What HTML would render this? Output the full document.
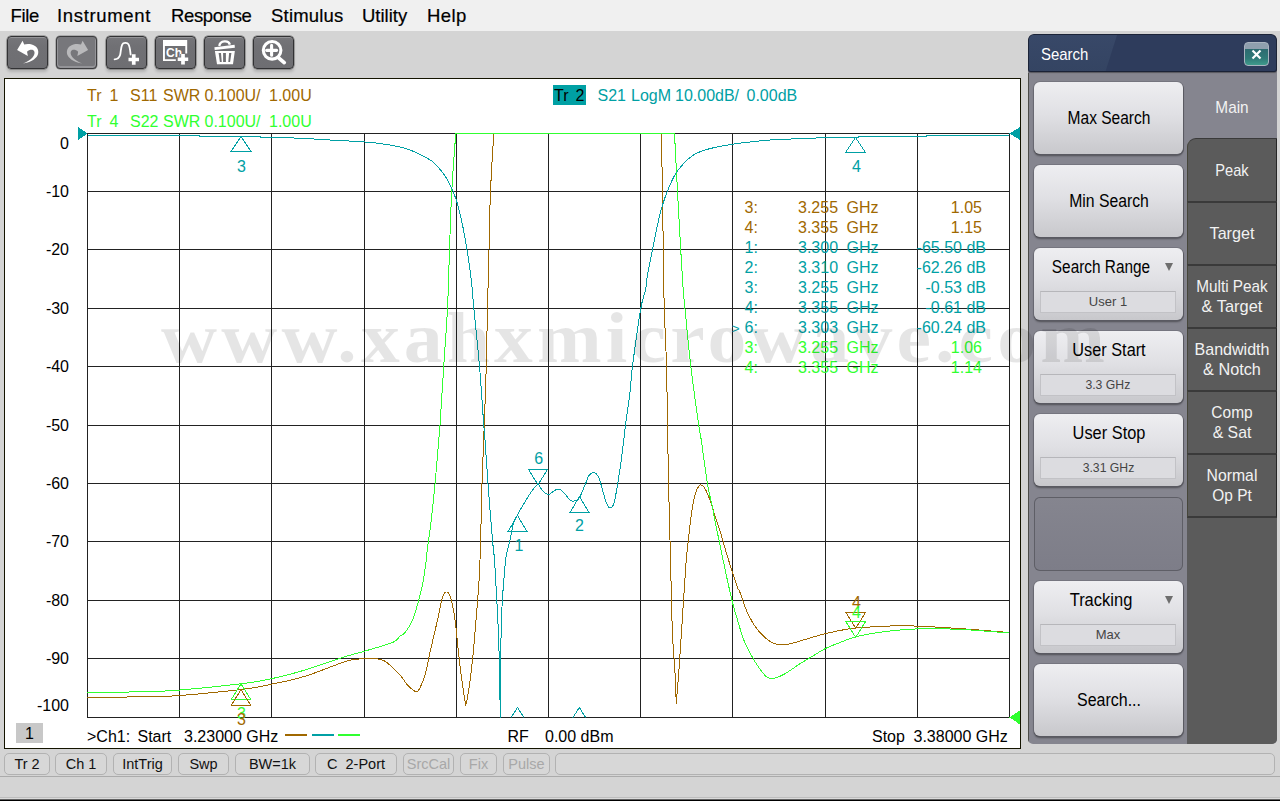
<!DOCTYPE html>
<html lang="en">
<head>
<meta charset="utf-8">
<title>Network Analyzer - Search</title>
<style>
html,body{margin:0;padding:0;}
body{width:1280px;height:801px;overflow:hidden;background:#d4d4d4;font-family:"Liberation Sans",sans-serif;position:relative;}
#app{position:absolute;left:0;top:0;width:1280px;height:801px;overflow:hidden;background:#d4d4d4;}
#menubar{position:absolute;left:0;top:0;width:1280px;height:31px;background:#f0f0f0;}
#menubar span{-webkit-text-stroke:.2px #000;position:absolute;top:4px;font-size:18.5px;line-height:24px;color:#000;white-space:nowrap;}
#toolbar{position:absolute;left:0;top:31px;width:1280px;height:47px;background:#d4d4d4;}
.tb{position:absolute;top:5px;width:39px;height:31px;border:1px solid #323234;border-radius:4px;background:linear-gradient(#76767a,#707074 30%,#6e6e72);box-shadow:0 0 0 .5px rgba(50,50,52,.6),0 3px 3px rgba(0,0,0,.16), inset 0 1px 0 rgba(255,255,255,.22);}
.tb.dis{background:#77777b;border-color:#3c3c3e;box-shadow:0 0 0 .5px rgba(50,50,52,.5), inset 0 -1px 0 1px rgba(255,255,255,.22);}
.tb svg{position:absolute;left:-1px;top:-1px;width:41px;height:33px;}
#plot{position:absolute;left:4px;top:78px;width:1015px;height:669px;border:1px solid #141400;background:#fff;}
#chart{position:absolute;left:0;top:0;width:1280px;height:801px;font-family:"Liberation Sans",sans-serif;}
#wm{position:absolute;left:161px;top:298px;transform:scaleX(1.078);transform-origin:0 0;font-family:"Liberation Serif",serif;font-weight:bold;font-size:72px;line-height:80px;letter-spacing:3.85px;color:rgba(0,0,0,.10);white-space:nowrap;}
#status .sb{position:absolute;top:753px;height:20px;border:1px solid #b2b2b2;border-radius:5px;background:#d7d7d7;font-size:14.5px;line-height:20px;text-align:center;color:#111;white-space:pre;}
#status .sb.dis{color:#a8a8a8;}
#sep{position:absolute;left:0;top:776px;width:1280px;height:1px;background:#ababab;}
#bottom{position:absolute;left:0;top:777px;width:1280px;height:20px;background:#d4d4d4;border-bottom:1px solid #bdbdbd;}
#bline{position:absolute;left:0;top:798px;width:1280px;height:3px;background:linear-gradient(#dadada 0,#dadada 33%,#606060 34%,#606060 66%,#000 67%);}
/* Search panel */
#panel{position:absolute;left:1028px;top:34px;width:249px;height:710px;border-radius:6px 6px 5px 5px;background:#85858f;overflow:hidden;}
#pbody{position:absolute;left:0;top:1px;width:249px;height:709px;}
#ptitle{position:absolute;left:0;top:0;width:249px;height:38px;z-index:2;box-sizing:border-box;background:#2e3c5c;border:1px solid #1c2438;border-bottom:1px solid #1a2236;border-radius:6px 6px 3px 3px;color:#fff;font-size:17px;line-height:38px;overflow:hidden;box-shadow:0 1px 1px rgba(0,0,0,.35);}
#ptitle i{position:absolute;left:0;top:0;width:95px;height:38px;background:linear-gradient(#384868,#344462);clip-path:polygon(0 0,88px 0,76px 38px,0 38px);}
#ptitle span{position:absolute;left:12px;top:1px;transform:scaleX(.88);transform-origin:0 50%;}
#pclose{z-index:3;position:absolute;left:216px;top:7px;width:23px;height:22px;border:1px solid #aab4c0;border-radius:4px;background:linear-gradient(#8f9fae 0,#8f9fae 26%,#2d6a70 27%,#2f7a78 70%,#3f9a8c 100%);}
#pclose svg{position:absolute;left:0;top:0;}
#tabs{position:absolute;left:159px;top:38px;width:90px;height:671px;background:linear-gradient(#85858f 0,#85858f 100px,#5b5b5b 100px);}
.tab span{display:block;}
.tab{position:absolute;left:0;width:90px;color:#f2f2f2;font-size:17px;line-height:20px;text-align:center;box-sizing:border-box;}
.tab.off{background:#5b5b5b;border-top:2px solid #3a3a3a;border-left:1px solid #46463a;border-right:1px solid #262626;}
.tab.on{background:#85858f;}
.btn{position:absolute;left:6px;width:149px;height:72px;border-radius:6px;background:linear-gradient(#eeeef1 0%,#e0e0e4 45%,#c8c8cc 100%);box-shadow:1px 1px 0 #5a5a62,0 2px 2px rgba(0,0,0,.4),0 0 0 1px rgba(70,70,80,.25);color:#000;font-size:17.5px;text-align:center;}
.btn .lbl{position:absolute;left:0;width:150px;line-height:20px;margin-top:1px;}
.btn .val{position:absolute;left:6px;top:43px;width:134px;height:20px;border:1px solid #c2c2c6;border-top-color:#b6b6ba;background:#dcdce0;font-size:13px;line-height:19px;color:#444;}
.btn .arr{position:absolute;left:131px;top:15px;width:0;height:0;border-left:4.2px solid transparent;border-right:4.2px solid transparent;border-top:8px solid #6e6e6e;}
.btn.empty{background:linear-gradient(#85858f,#7d7d88);box-shadow:inset 0 0 0 1px #5e5e66;}
</style>
</head>
<body>
<div id="app">
  <div id="menubar">
    <span style="left:10.5px;letter-spacing:-.3px">File</span><span style="left:57px;letter-spacing:.66px">Instrument</span><span style="left:171px;letter-spacing:-.35px">Response</span><span style="left:271px;letter-spacing:.2px">Stimulus</span><span style="left:362px">Utility</span><span style="left:427px;letter-spacing:.4px">Help</span>
  </div>
  <div id="toolbar">
    <div class="tb" style="left:7px"><svg viewBox="0 0 41 33"><path d="M10.1 14.1 L15.6 4.65 L17.2 8.6 C20 7.6 25 7.8 28.4 10.15 C31 12 32.2 16 30.5 19.6 C28.5 23.5 22 27.2 16.1 27.4 C20 26 23.5 23.5 25.3 21.7 C27.5 19.5 28.5 16 26.35 14.35 C24.5 13.3 22 14 20.05 15.65 L20.85 20.1 Z" fill="#fff"/></svg></div>
    <div class="tb dis" style="left:56px"><svg viewBox="0 0 41 33"><g transform="translate(42.2 0) scale(-1 1)"><path d="M10.1 14.1 L15.6 4.65 L17.2 8.6 C20 7.6 25 7.8 28.4 10.15 C31 12 32.2 16 30.5 19.6 C28.5 23.5 22 27.2 16.1 27.4 C20 26 23.5 23.5 25.3 21.7 C27.5 19.5 28.5 16 26.35 14.35 C24.5 13.3 22 14 20.05 15.65 L20.85 20.1 Z" fill="#b9b9bb"/></g></svg></div>
    <div class="tb" style="left:106px"><svg viewBox="0 0 41 33"><path d="M8.6 23.3 C11 23.3 13 22.5 14.1 19 C15 16 14.6 12 16.2 8.6 C17.2 6.6 21.3 6.3 22.5 8.4 C24 11 24.2 15 24.6 18.5" fill="none" stroke="#fff" stroke-width="1.8" stroke-linecap="round"/><path d="M22.5 23.5 H33 M27.75 18.3 V28.75" stroke="#fff" stroke-width="3.7" fill="none"/></svg></div>
    <div class="tb" style="left:155px"><svg viewBox="0 0 41 33"><path d="M8 4.1 H32.2 V17.5 H30.3 V9.9 H9.9 V23.25 H20.8 V25.1 H8 Z" fill="#fff"/><text x="11" y="20.7" font-size="12.5" font-weight="bold" fill="#fff" font-family="Liberation Sans, sans-serif" textLength="16" lengthAdjust="spacingAndGlyphs">Ch</text><path d="M22.7 23.25 H33.2 M28 18 V28.5" stroke="#707074" stroke-width="5.6" fill="none"/><path d="M22.7 23.25 H33.2 M28 18 V28.5" stroke="#fff" stroke-width="3.7" fill="none"/></svg></div>
    <div class="tb" style="left:204px"><svg viewBox="0 0 41 33"><path d="M10.9 15.1 H30.85 L29 28.2 H13 Z M14.6 17 L15.9 25.9 H17.75 L17 17 Z M19.1 17 V25.9 H21.9 V17 Z M25.1 17 L24.3 25.9 H26.1 L27.4 17 Z" fill="#fff" fill-rule="evenodd"/><path d="M10.4 11.2 L30.6 8.85 L30.85 11.7 L10.7 14 Z" fill="#fff"/><path d="M15.3 10 C16 4.5 24.5 3.8 25.9 8.6" fill="none" stroke="#fff" stroke-width="2.3"/></svg></div>
    <div class="tb" style="left:253px"><svg viewBox="0 0 41 33"><circle cx="19.1" cy="14.35" r="8.8" fill="none" stroke="#fff" stroke-width="3.1"/><path d="M13.6 14.35 H23.6 M18.6 9.4 V19.2" stroke="#fff" stroke-width="3.1" stroke-linecap="round" fill="none"/><path d="M25.6 21.9 L31.2 26.6" stroke="#fff" stroke-width="3.8" stroke-linecap="round" fill="none"/></svg></div>
  </div>
  <div id="plot"></div>
  <svg id="chart" width="1280" height="801" viewBox="0 0 1280 801">
    <defs><clipPath id="gc"><rect x="87" y="133" width="923" height="584.5"/></clipPath></defs>
<line x1="87.5" y1="133.0" x2="87.5" y2="718.0" stroke="#222" stroke-width="1" shape-rendering="crispEdges"/>
<line x1="179.5" y1="133.0" x2="179.5" y2="718.0" stroke="#222" stroke-width="1" shape-rendering="crispEdges"/>
<line x1="271.5" y1="133.0" x2="271.5" y2="718.0" stroke="#222" stroke-width="1" shape-rendering="crispEdges"/>
<line x1="364.5" y1="133.0" x2="364.5" y2="718.0" stroke="#222" stroke-width="1" shape-rendering="crispEdges"/>
<line x1="456.5" y1="133.0" x2="456.5" y2="718.0" stroke="#222" stroke-width="1" shape-rendering="crispEdges"/>
<line x1="548.5" y1="133.0" x2="548.5" y2="718.0" stroke="#222" stroke-width="1" shape-rendering="crispEdges"/>
<line x1="640.5" y1="133.0" x2="640.5" y2="718.0" stroke="#222" stroke-width="1" shape-rendering="crispEdges"/>
<line x1="732.5" y1="133.0" x2="732.5" y2="718.0" stroke="#222" stroke-width="1" shape-rendering="crispEdges"/>
<line x1="825.5" y1="133.0" x2="825.5" y2="718.0" stroke="#222" stroke-width="1" shape-rendering="crispEdges"/>
<line x1="917.5" y1="133.0" x2="917.5" y2="718.0" stroke="#222" stroke-width="1" shape-rendering="crispEdges"/>
<line x1="1009.5" y1="133.0" x2="1009.5" y2="718.0" stroke="#222" stroke-width="1" shape-rendering="crispEdges"/>
<line x1="87.0" y1="133.5" x2="1010.0" y2="133.5" stroke="#222" stroke-width="1" shape-rendering="crispEdges"/>
<line x1="87.0" y1="191.5" x2="1010.0" y2="191.5" stroke="#222" stroke-width="1" shape-rendering="crispEdges"/>
<line x1="87.0" y1="249.5" x2="1010.0" y2="249.5" stroke="#222" stroke-width="1" shape-rendering="crispEdges"/>
<line x1="87.0" y1="308.5" x2="1010.0" y2="308.5" stroke="#222" stroke-width="1" shape-rendering="crispEdges"/>
<line x1="87.0" y1="366.5" x2="1010.0" y2="366.5" stroke="#222" stroke-width="1" shape-rendering="crispEdges"/>
<line x1="87.0" y1="425.5" x2="1010.0" y2="425.5" stroke="#222" stroke-width="1" shape-rendering="crispEdges"/>
<line x1="87.0" y1="483.5" x2="1010.0" y2="483.5" stroke="#222" stroke-width="1" shape-rendering="crispEdges"/>
<line x1="87.0" y1="541.5" x2="1010.0" y2="541.5" stroke="#222" stroke-width="1" shape-rendering="crispEdges"/>
<line x1="87.0" y1="600.5" x2="1010.0" y2="600.5" stroke="#222" stroke-width="1" shape-rendering="crispEdges"/>
<line x1="87.0" y1="658.5" x2="1010.0" y2="658.5" stroke="#222" stroke-width="1" shape-rendering="crispEdges"/>
<line x1="87.0" y1="717.5" x2="1010.0" y2="717.5" stroke="#222" stroke-width="1" shape-rendering="crispEdges"/>
<polyline points="87.50,697.50 97.79,697.38 112.66,697.20 128.69,696.99 142.50,696.75 152.55,696.58 160.86,696.45 169.37,696.16 180.00,695.50 194.38,694.32 211.09,692.75 227.58,691.06 241.25,689.50 250.86,688.20 257.97,687.00 264.22,685.74 271.25,684.25 279.34,682.58 287.66,680.78 296.21,678.72 305.00,676.25 314.70,672.96 325.08,669.06 334.79,665.32 342.50,662.50 347.32,660.95 350.16,660.22 352.29,659.88 355.00,659.50 358.69,659.01 362.66,658.61 366.54,658.35 370.00,658.25 372.91,658.33 375.47,658.58 377.79,658.97 380.00,659.50 381.93,660.02 383.59,660.58 385.33,661.47 387.50,663.00 390.39,665.45 393.75,668.59 397.11,671.94 400.00,675.00 402.23,677.73 404.06,680.36 405.74,682.81 407.50,685.00 409.46,687.00 411.48,688.83 413.39,690.30 415.00,691.25 416.14,691.79 416.95,691.95 417.72,691.46 418.75,690.00 420.17,687.39 421.80,683.83 423.47,679.60 425.00,675.00 426.28,670.14 427.42,664.84 428.60,659.00 430.00,652.50 431.76,644.84 433.75,636.25 435.74,627.66 437.50,620.00 438.94,613.27 440.19,607.06 441.34,601.70 442.50,597.50 443.67,594.61 444.80,592.84 445.90,592.03 447.00,592.00 448.09,592.77 449.17,594.41 450.23,596.84 451.25,600.00 452.22,603.80 453.16,608.31 454.07,613.66 455.00,620.00 455.94,627.81 456.88,636.88 457.81,646.25 458.75,655.00 459.70,663.07 460.66,670.91 461.60,678.29 462.50,685.00 463.42,691.27 464.36,697.12 465.18,702.04 465.75,705.50 466.27,703.05 467.02,699.62 467.88,695.26 468.75,690.00 469.63,683.81 470.58,676.69 471.54,668.72 472.50,660.00 473.47,650.02 474.45,638.91 475.40,627.71 476.25,617.50 476.99,608.50 477.66,600.16 478.24,592.36 478.75,585.00 479.15,578.69 479.45,573.28 479.72,567.48 480.00,560.00 480.32,549.83 480.66,537.89 480.97,525.75 481.25,515.00 481.44,506.87 481.56,500.23 481.72,493.17 482.00,483.75 482.46,471.00 483.05,456.11 483.67,440.35 484.25,425.00 484.79,410.24 485.31,395.45 485.81,380.69 486.25,366.00 486.61,351.43 486.91,336.94 487.19,322.48 487.50,308.00 487.86,293.52 488.23,279.06 488.62,264.57 489.00,250.00 489.33,235.29 489.64,220.47 490.00,205.67 490.50,191.00 491.27,175.17 492.22,158.56 493.12,143.80 493.75,133.50" fill="none" stroke="#a06800" stroke-width="1" stroke-linejoin="round" shape-rendering="crispEdges"/>
<polyline points="661.25,133.50 661.49,143.80 661.83,158.56 662.19,175.17 662.50,191.00 662.72,205.67 662.89,220.47 663.06,235.29 663.25,250.00 663.45,264.57 663.66,279.06 663.91,293.52 664.25,308.00 664.75,322.48 665.38,336.94 666.00,351.43 666.50,366.00 666.84,380.69 667.07,395.45 667.27,410.24 667.50,425.00 667.76,439.76 668.03,454.55 668.30,469.24 668.60,483.75 668.93,498.13 669.29,512.42 669.65,526.44 670.00,540.00 670.32,553.06 670.63,565.70 670.94,578.00 671.25,590.00 671.53,601.78 671.80,613.28 672.10,624.39 672.50,635.00 673.07,645.05 673.75,654.61 674.43,663.74 675.00,672.50 675.43,681.48 675.78,690.47 676.05,698.28 676.25,703.75 676.70,698.28 677.34,690.47 678.07,681.48 678.75,672.50 679.38,663.56 680.00,654.14 680.62,644.52 681.25,635.00 681.88,625.62 682.50,616.25 683.12,606.88 683.75,597.50 684.40,587.54 685.08,577.19 685.71,567.62 686.25,560.00 686.59,555.59 686.80,553.44 687.04,551.45 687.50,547.50 688.26,540.49 689.22,531.72 690.25,522.71 691.25,515.00 692.19,508.86 693.12,503.52 694.06,498.92 695.00,495.00 695.97,491.85 696.95,489.45 697.90,487.65 698.75,486.25 699.43,485.29 700.00,484.84 700.57,484.79 701.25,485.00 702.07,485.41 702.97,486.09 703.95,487.17 705.00,488.75 706.16,490.92 707.42,493.61 708.72,496.68 710.00,500.00 711.22,503.60 712.42,507.52 713.66,511.68 715.00,516.00 716.50,520.57 718.12,525.41 719.75,530.29 721.25,535.00 722.56,539.42 723.75,543.69 724.94,547.98 726.25,552.50 727.75,557.44 729.38,562.66 731.00,567.79 732.50,572.50 733.90,576.84 735.23,580.94 736.46,584.57 737.50,587.50 738.21,589.16 738.67,589.84 739.17,590.61 740.00,592.50 741.24,596.03 742.73,600.55 744.42,605.42 746.25,610.00 748.23,614.27 750.39,618.52 752.67,622.57 755.00,626.25 757.41,629.53 759.92,632.50 762.47,635.16 765.00,637.50 767.50,639.54 770.00,641.28 772.50,642.69 775.00,643.75 777.50,644.39 780.00,644.64 782.50,644.63 785.00,644.50 787.38,644.25 789.69,643.83 792.15,643.24 795.00,642.50 798.40,641.54 802.19,640.39 806.13,639.17 810.00,638.00 813.75,636.90 817.50,635.80 821.25,634.74 825.00,633.75 828.75,632.85 832.50,632.02 836.25,631.24 840.00,630.50 843.63,629.79 847.19,629.12 850.90,628.52 855.00,628.00 859.53,627.59 864.38,627.28 869.53,627.02 875.00,626.75 880.90,626.44 887.19,626.12 893.63,625.87 900.00,625.75 905.96,625.78 911.72,625.92 917.87,626.17 925.00,626.50 933.29,626.92 942.42,627.44 952.22,628.05 962.50,628.75 974.53,629.67 987.97,630.77 1000.23,631.79 1008.75,632.50" fill="none" stroke="#a06800" stroke-width="1" stroke-linejoin="round" shape-rendering="crispEdges"/>
<polyline points="87.50,692.50 97.79,692.39 112.66,692.23 128.69,692.03 142.50,691.75 152.55,691.49 160.86,691.22 169.37,690.78 180.00,690.00 194.38,688.72 211.09,687.08 227.58,685.33 241.25,683.75 250.86,682.50 257.97,681.41 264.22,680.23 271.25,678.75 279.34,676.91 287.66,674.84 296.21,672.54 305.00,670.00 314.48,666.99 324.50,663.59 334.14,660.27 342.50,657.50 348.89,655.56 353.95,654.14 358.72,652.84 364.25,651.25 371.34,649.19 379.27,646.89 386.74,644.59 392.50,642.50 395.89,640.65 397.70,638.92 398.79,637.36 400.00,636.00 401.37,635.12 402.50,634.62 403.63,633.94 405.00,632.50 406.73,630.18 408.67,627.28 410.65,623.86 412.50,620.00 414.21,615.41 415.86,610.16 417.39,604.82 418.75,600.00 419.92,595.72 420.94,591.72 421.80,588.11 422.50,585.00 422.96,582.83 423.20,581.41 423.41,579.90 423.75,577.50 424.32,573.71 425.00,569.06 425.68,564.26 426.25,560.00 426.59,556.88 426.80,554.38 427.04,551.56 427.50,547.50 428.26,541.88 429.22,535.23 430.25,527.84 431.25,520.00 432.19,511.73 433.12,502.89 434.06,493.54 435.00,483.75 436.00,472.67 437.03,460.55 437.99,449.09 438.75,440.00 439.18,435.26 439.38,433.45 439.57,431.17 440.00,425.00 440.76,413.32 441.72,398.19 442.75,381.71 443.75,366.00 444.73,351.43 445.73,336.94 446.69,322.48 447.50,308.00 448.12,293.52 448.59,279.06 449.02,264.57 449.50,250.00 450.00,235.29 450.50,220.47 451.06,205.67 451.75,191.00 452.72,175.17 453.89,158.56 454.99,143.80 455.75,133.50 674.50,133.50 675.03,143.80 675.80,158.56 676.66,175.17 677.50,191.00 678.31,206.09 679.16,221.59 679.98,236.55 680.75,250.00 681.45,261.84 682.09,272.53 682.70,281.96 683.25,290.00 683.65,295.22 683.92,298.16 684.30,301.64 685.00,308.50 686.10,320.10 687.48,334.72 689.06,350.61 690.75,366.00 692.72,381.68 694.95,398.16 697.08,413.31 698.75,425.00 699.67,431.17 700.11,433.45 700.49,435.26 701.25,440.00 702.58,449.38 704.22,461.33 705.94,473.54 707.50,483.75 708.93,491.47 710.31,497.89 711.54,503.17 712.50,507.50 712.96,509.99 713.05,510.86 713.17,511.92 713.75,515.00 714.96,520.92 716.56,528.59 718.32,536.97 720.00,545.00 721.56,552.56 723.12,560.16 724.69,567.68 726.25,575.00 727.84,582.29 729.45,589.53 731.03,596.39 732.50,602.50 733.87,607.70 735.16,612.19 736.37,616.21 737.50,620.00 738.55,623.59 739.53,626.88 740.43,629.84 741.25,632.50 741.82,634.49 742.19,635.94 742.71,637.54 743.75,640.00 745.47,643.73 747.66,648.28 750.08,653.07 752.50,657.50 755.00,661.65 757.66,665.75 760.23,669.48 762.50,672.50 764.33,674.67 765.86,676.19 767.28,677.23 768.75,678.00 770.22,678.49 771.64,678.61 773.17,678.43 775.00,678.00 777.12,677.37 779.45,676.50 782.06,675.32 785.00,673.75 788.46,671.60 792.34,668.95 796.31,666.21 800.00,663.75 803.30,661.70 806.41,659.84 809.43,658.07 812.50,656.25 815.57,654.35 818.59,652.42 821.70,650.54 825.00,648.75 828.57,647.08 832.34,645.50 836.19,643.98 840.00,642.50 843.63,641.04 847.19,639.61 850.90,638.25 855.00,637.00 859.53,635.87 864.38,634.84 869.53,633.89 875.00,633.00 880.90,632.14 887.19,631.33 893.63,630.60 900.00,630.00 905.96,629.52 911.72,629.14 917.87,628.88 925.00,628.75 933.29,628.73 942.42,628.83 952.22,629.07 962.50,629.50 974.53,630.26 987.97,631.30 1000.23,632.31 1008.75,633.00" fill="none" stroke="#30ff30" stroke-width="1" stroke-linejoin="round" shape-rendering="crispEdges"/>
<polyline points="87.50,135.50 199.50,135.50 200.00,136.50 260.50,136.50 261.00,137.50 290.00,137.80 293.59,137.98 298.75,138.23 304.53,138.51 310.00,138.80 314.65,139.07 319.06,139.34 323.95,139.64 330.00,140.00 338.05,140.44 347.50,140.93 356.95,141.46 365.00,142.00 371.17,142.53 376.25,143.08 380.70,143.65 385.00,144.25 389.22,144.90 393.12,145.58 396.72,146.28 400.00,147.00 402.79,147.67 405.16,148.31 407.44,149.05 410.00,150.00 412.95,151.19 416.09,152.56 419.32,154.09 422.50,155.75 425.62,157.40 428.75,159.09 431.88,161.12 435.00,163.75 438.21,167.14 441.48,171.12 444.64,175.48 447.50,180.00 450.01,184.62 452.27,189.45 454.33,194.56 456.25,200.00 458.03,205.90 459.64,212.19 461.12,218.63 462.50,225.00 463.75,231.13 464.88,237.19 465.93,243.40 467.00,250.00 468.12,257.15 469.23,264.69 470.30,272.38 471.25,280.00 471.98,286.89 472.55,293.38 473.15,300.67 474.00,310.00 475.21,322.10 476.66,336.19 478.15,351.18 479.50,366.00 480.72,381.57 481.89,398.06 482.93,413.27 483.75,425.00 484.23,431.17 484.45,433.45 484.63,435.26 485.00,440.00 485.67,449.56 486.50,461.80 487.33,474.07 488.00,483.75 488.39,489.19 488.61,492.11 488.84,494.91 489.25,500.00 489.95,508.80 490.83,519.77 491.73,530.85 492.50,540.00 493.09,546.17 493.59,550.62 494.05,554.77 494.50,560.00 494.94,566.45 495.36,573.44 495.78,581.21 496.25,590.00 496.81,600.38 497.42,612.06 498.01,623.96 498.50,635.00 498.85,645.02 499.11,654.56 499.31,663.57 499.50,672.00 499.67,680.29 499.81,688.31 499.92,695.18 500.00,700.00 500.30,717.00 500.50,717.00 500.75,650.00 500.88,644.42 501.06,636.38 501.28,627.64 501.50,620.00 501.70,614.17 501.89,609.12 502.14,604.02 502.50,598.00 503.03,590.28 503.69,581.50 504.38,572.97 505.00,566.00 505.51,561.19 505.97,557.75 506.44,554.94 507.00,552.00 507.66,548.99 508.39,546.22 509.17,543.34 510.00,540.00 510.88,535.78 511.83,530.97 512.79,526.30 513.75,522.50 514.66,519.96 515.55,518.22 516.47,516.75 517.50,515.00 518.60,512.93 519.77,510.80 521.04,508.51 522.50,506.00 524.20,503.10 526.09,499.89 528.07,496.68 530.00,493.75 531.99,490.95 534.06,488.20 535.98,485.92 537.50,484.50 538.45,484.24 538.98,484.86 539.40,485.92 540.00,487.00 540.82,488.13 541.72,489.50 542.70,490.87 543.75,492.00 544.91,492.94 546.17,493.78 547.47,494.36 548.75,494.50 550.00,494.01 551.25,493.03 552.50,491.91 553.75,491.00 555.00,490.27 556.25,489.56 557.50,489.08 558.75,489.00 559.97,489.39 561.17,490.16 562.41,491.21 563.75,492.50 565.25,494.25 566.88,496.42 568.50,498.51 570.00,500.00 571.35,500.76 572.61,501.05 573.81,501.00 575.00,500.75 576.14,500.44 577.22,499.95 578.32,499.06 579.50,497.50 580.85,494.94 582.30,491.61 583.72,488.10 585.00,485.00 586.03,482.38 586.91,479.94 587.77,477.78 588.75,476.00 589.91,474.54 591.17,473.38 592.47,472.65 593.75,472.50 595.03,472.98 596.33,474.00 597.59,475.52 598.75,477.50 599.78,480.10 600.70,483.28 601.59,486.70 602.50,490.00 603.44,493.29 604.38,496.69 605.31,499.87 606.25,502.50 607.19,504.60 608.12,506.30 609.06,507.47 610.00,508.00 610.94,507.96 611.88,507.39 612.81,506.06 613.75,503.75 614.69,500.23 615.62,495.67 616.56,490.47 617.50,485.00 618.47,479.07 619.45,472.58 620.40,466.04 621.25,460.00 621.98,454.53 622.62,449.38 623.21,444.53 623.75,440.00 624.18,436.31 624.50,433.28 624.89,429.86 625.50,425.00 626.48,417.96 627.70,409.47 628.95,400.61 630.00,392.50 630.64,386.14 631.03,380.72 631.54,374.56 632.50,366.00 634.18,353.23 636.34,337.59 638.58,322.16 640.50,310.00 642.03,302.35 643.38,297.44 644.53,293.80 645.50,290.00 646.14,286.13 646.50,282.81 646.86,279.34 647.50,275.00 648.54,269.45 649.81,263.12 651.18,256.48 652.50,250.00 653.75,243.63 655.00,237.19 656.25,230.90 657.50,225.00 658.69,219.65 659.84,214.69 661.07,209.88 662.50,205.00 664.20,199.86 666.09,194.62 668.07,189.58 670.00,185.00 671.76,181.07 673.44,177.59 675.27,174.32 677.50,171.00 680.21,167.45 683.28,163.84 686.58,160.44 690.00,157.50 693.28,155.16 696.56,153.27 700.31,151.61 705.00,150.00 710.76,148.40 717.34,146.92 724.63,145.54 732.50,144.25 741.35,143.01 751.09,141.85 760.92,140.82 770.00,140.00 778.14,139.46 785.78,139.15 793.03,138.94 800.00,138.70 807.19,138.39 814.38,138.07 820.62,137.79 825.00,137.60 858.50,137.50 859.00,136.50 926.50,136.50 927.00,135.50 1009.00,135.50" fill="none" stroke="#00a0a4" stroke-width="1" stroke-linejoin="round" shape-rendering="crispEdges"/>
<polygon points="241.00,136.50 231.00,151.50 251.00,151.50" fill="none" stroke="#00a0a4" stroke-width="1" shape-rendering="crispEdges"/>
<text x="241.50" y="172.00" fill="#00a0a4" font-size="16" text-anchor="middle" >3</text>
<polygon points="855.50,137.50 845.50,152.50 865.50,152.50" fill="none" stroke="#00a0a4" stroke-width="1" shape-rendering="crispEdges"/>
<text x="856.50" y="172.00" fill="#00a0a4" font-size="16" text-anchor="middle" >4</text>
<polygon points="517.50,515.50 508.25,531.00 526.75,531.00" fill="none" stroke="#00a0a4" stroke-width="1" shape-rendering="crispEdges"/>
<text x="519.00" y="550.70" fill="#00a0a4" font-size="16" text-anchor="middle" >1</text>
<polygon points="579.50,496.50 570.25,512.00 588.75,512.00" fill="none" stroke="#00a0a4" stroke-width="1" shape-rendering="crispEdges"/>
<text x="579.50" y="531.30" fill="#00a0a4" font-size="16" text-anchor="middle" >2</text>
<polygon points="538.00,484.80 528.50,469.50 547.50,469.50" fill="none" stroke="#00a0a4" stroke-width="1" shape-rendering="crispEdges"/>
<text x="538.70" y="464.30" fill="#00a0a4" font-size="16" text-anchor="middle" >6</text>
<g clip-path="url(#gc)"><polygon points="517.50,707.50 508.00,722.50 527.00,722.50" fill="none" stroke="#00a0a4" stroke-width="1" shape-rendering="crispEdges"/><polygon points="579.30,707.50 569.80,722.50 588.80,722.50" fill="none" stroke="#00a0a4" stroke-width="1" shape-rendering="crispEdges"/></g>
<polygon points="241.00,683.80 231.25,699.50 250.75,699.50" fill="none" stroke="#30ff30" stroke-width="1" shape-rendering="crispEdges"/>
<text x="241.50" y="718.70" fill="#30ff30" font-size="16" text-anchor="middle" >3</text>
<polygon points="241.00,689.60 231.25,705.30 250.75,705.30" fill="none" stroke="#a06800" stroke-width="1" shape-rendering="crispEdges"/>
<text x="241.50" y="724.80" fill="#a06800" font-size="16" text-anchor="middle" >3</text>
<polygon points="855.70,628.30 845.95,612.60 865.45,612.60" fill="none" stroke="#a06800" stroke-width="1" shape-rendering="crispEdges"/>
<text x="856.50" y="608.30" fill="#a06800" font-size="16" text-anchor="middle" >4</text>
<polygon points="855.70,637.40 845.95,621.70 865.45,621.70" fill="none" stroke="#30ff30" stroke-width="1" shape-rendering="crispEdges"/>
<text x="856.50" y="617.80" fill="#30ff30" font-size="16" text-anchor="middle" >4</text>
<polygon points="78,127 87.5,133.5 78,140" fill="#00a0a4" shape-rendering="crispEdges"/>
<polygon points="1020,127 1009.5,133.5 1020,140" fill="#00a0a4" shape-rendering="crispEdges"/>
<polygon points="1020,710.5 1009.5,717.5 1020,724.5" fill="#30ff30" shape-rendering="crispEdges"/>
<text x="69.00" y="149.00" fill="#000" font-size="16" text-anchor="end" >0</text>
<text x="69.00" y="197.00" fill="#000" font-size="16" text-anchor="end" >-10</text>
<text x="69.00" y="255.00" fill="#000" font-size="16" text-anchor="end" >-20</text>
<text x="69.00" y="314.00" fill="#000" font-size="16" text-anchor="end" >-30</text>
<text x="69.00" y="372.00" fill="#000" font-size="16" text-anchor="end" >-40</text>
<text x="69.00" y="431.00" fill="#000" font-size="16" text-anchor="end" >-50</text>
<text x="69.00" y="489.00" fill="#000" font-size="16" text-anchor="end" >-60</text>
<text x="69.00" y="547.00" fill="#000" font-size="16" text-anchor="end" >-70</text>
<text x="69.00" y="606.00" fill="#000" font-size="16" text-anchor="end" >-80</text>
<text x="69.00" y="664.00" fill="#000" font-size="16" text-anchor="end" >-90</text>
<text x="69.00" y="710.50" fill="#000" font-size="16" text-anchor="end" >-100</text>
<text x="87.00" y="101.00" fill="#a06800" font-size="16" text-anchor="start" >Tr</text><text x="109.50" y="101.00" fill="#a06800" font-size="16" text-anchor="start" >1</text><text x="130.00" y="101.00" fill="#a06800" font-size="16" text-anchor="start" >S11</text><text x="163.00" y="101.00" fill="#a06800" font-size="16" text-anchor="start" >SWR</text><text x="204.50" y="101.00" fill="#a06800" font-size="16" text-anchor="start" >0.100U/</text><text x="269.00" y="101.00" fill="#a06800" font-size="16" text-anchor="start" >1.00U</text>
<text x="87.00" y="127.00" fill="#30ff30" font-size="16" text-anchor="start" >Tr</text><text x="109.50" y="127.00" fill="#30ff30" font-size="16" text-anchor="start" >4</text><text x="130.00" y="127.00" fill="#30ff30" font-size="16" text-anchor="start" >S22</text><text x="163.00" y="127.00" fill="#30ff30" font-size="16" text-anchor="start" >SWR</text><text x="204.50" y="127.00" fill="#30ff30" font-size="16" text-anchor="start" >0.100U/</text><text x="269.00" y="127.00" fill="#30ff30" font-size="16" text-anchor="start" >1.00U</text>
<rect x="553" y="85" width="33" height="20" fill="#00a0a4"/>
<text x="554.00" y="101.00" fill="#000" font-size="16" text-anchor="start" >Tr</text><text x="575.50" y="101.00" fill="#000" font-size="16" text-anchor="start" >2</text>
<text x="597.50" y="101.00" fill="#00a0a4" font-size="16" text-anchor="start" >S21</text><text x="631.00" y="101.00" fill="#00a0a4" font-size="16" text-anchor="start" >LogM</text><text x="675.00" y="101.00" fill="#00a0a4" font-size="16" text-anchor="start" >10.00dB/</text><text x="746.50" y="101.00" fill="#00a0a4" font-size="16" text-anchor="start" >0.00dB</text>
<text x="744.50" y="213.00" fill="#a06800" font-size="16" text-anchor="start" >3:</text>
<text x="798.00" y="213.00" fill="#a06800" font-size="16" text-anchor="start" >3.255</text>
<text x="846.50" y="213.00" fill="#a06800" font-size="16" text-anchor="start" >GHz</text>
<text x="982.00" y="213.00" fill="#a06800" font-size="16" text-anchor="end" >1.05</text>
<text x="744.50" y="233.00" fill="#a06800" font-size="16" text-anchor="start" >4:</text>
<text x="798.00" y="233.00" fill="#a06800" font-size="16" text-anchor="start" >3.355</text>
<text x="846.50" y="233.00" fill="#a06800" font-size="16" text-anchor="start" >GHz</text>
<text x="982.00" y="233.00" fill="#a06800" font-size="16" text-anchor="end" >1.15</text>
<text x="744.50" y="253.00" fill="#00a0a4" font-size="16" text-anchor="start" >1:</text>
<text x="798.00" y="253.00" fill="#00a0a4" font-size="16" text-anchor="start" >3.300</text>
<text x="846.50" y="253.00" fill="#00a0a4" font-size="16" text-anchor="start" >GHz</text>
<text x="986.00" y="253.00" fill="#00a0a4" font-size="16" text-anchor="end" >-65.50 dB</text>
<text x="744.50" y="273.00" fill="#00a0a4" font-size="16" text-anchor="start" >2:</text>
<text x="798.00" y="273.00" fill="#00a0a4" font-size="16" text-anchor="start" >3.310</text>
<text x="846.50" y="273.00" fill="#00a0a4" font-size="16" text-anchor="start" >GHz</text>
<text x="986.00" y="273.00" fill="#00a0a4" font-size="16" text-anchor="end" >-62.26 dB</text>
<text x="744.50" y="293.00" fill="#00a0a4" font-size="16" text-anchor="start" >3:</text>
<text x="798.00" y="293.00" fill="#00a0a4" font-size="16" text-anchor="start" >3.255</text>
<text x="846.50" y="293.00" fill="#00a0a4" font-size="16" text-anchor="start" >GHz</text>
<text x="986.00" y="293.00" fill="#00a0a4" font-size="16" text-anchor="end" >-0.53 dB</text>
<text x="744.50" y="313.00" fill="#00a0a4" font-size="16" text-anchor="start" >4:</text>
<text x="798.00" y="313.00" fill="#00a0a4" font-size="16" text-anchor="start" >3.355</text>
<text x="846.50" y="313.00" fill="#00a0a4" font-size="16" text-anchor="start" >GHz</text>
<text x="986.00" y="313.00" fill="#00a0a4" font-size="16" text-anchor="end" >-0.61 dB</text>
<text x="732.00" y="333.00" fill="#00a0a4" font-size="13" text-anchor="start" >&gt;</text>
<text x="744.50" y="333.00" fill="#00a0a4" font-size="16" text-anchor="start" >6:</text>
<text x="798.00" y="333.00" fill="#00a0a4" font-size="16" text-anchor="start" >3.303</text>
<text x="846.50" y="333.00" fill="#00a0a4" font-size="16" text-anchor="start" >GHz</text>
<text x="986.00" y="333.00" fill="#00a0a4" font-size="16" text-anchor="end" >-60.24 dB</text>
<text x="744.50" y="353.00" fill="#30ff30" font-size="16" text-anchor="start" >3:</text>
<text x="798.00" y="353.00" fill="#30ff30" font-size="16" text-anchor="start" >3.255</text>
<text x="846.50" y="353.00" fill="#30ff30" font-size="16" text-anchor="start" >GHz</text>
<text x="982.00" y="353.00" fill="#30ff30" font-size="16" text-anchor="end" >1.06</text>
<text x="744.50" y="373.00" fill="#30ff30" font-size="16" text-anchor="start" >4:</text>
<text x="798.00" y="373.00" fill="#30ff30" font-size="16" text-anchor="start" >3.355</text>
<text x="846.50" y="373.00" fill="#30ff30" font-size="16" text-anchor="start" >GHz</text>
<text x="982.00" y="373.00" fill="#30ff30" font-size="16" text-anchor="end" >1.14</text>
<text x="87.00" y="741.50" fill="#000" font-size="16" text-anchor="start" >&gt;Ch1:</text><text x="137.50" y="741.50" fill="#000" font-size="16" text-anchor="start" >Start</text><text x="184.00" y="741.50" fill="#000" font-size="16" text-anchor="start" >3.23000 GHz</text>
<text x="507.50" y="741.50" fill="#000" font-size="16" text-anchor="start" >RF</text><text x="545.00" y="741.50" fill="#000" font-size="16" text-anchor="start" >0.00 dBm</text>
<text x="872.00" y="741.50" fill="#000" font-size="16" text-anchor="start" >Stop</text><text x="913.50" y="741.50" fill="#000" font-size="16" text-anchor="start" >3.38000 GHz</text>
<rect x="285" y="734" width="22" height="2" fill="#a06800"/>
<rect x="312" y="734" width="22" height="2" fill="#00a0a4"/>
<rect x="338" y="734" width="22" height="2" fill="#30ff30"/>
<rect x="16" y="723" width="27" height="20" fill="#c8c8c8"/>
<text x="29.50" y="738.50" fill="#000" font-size="16" text-anchor="middle" >1</text>
  </svg>
  <div id="status">
    <div class="sb" style="left:4px;width:44px">Tr 2</div>
    <div class="sb" style="left:55px;width:50px">Ch 1</div>
    <div class="sb" style="left:113px;width:57px">IntTrig</div>
    <div class="sb" style="left:178px;width:49px">Swp</div>
    <div class="sb" style="left:235px;width:73px">BW=1k</div>
    <div class="sb" style="left:315px;width:80px">C  2-Port</div>
    <div class="sb dis" style="left:403px;width:49px">SrcCal</div>
    <div class="sb dis" style="left:460px;width:35px">Fix</div>
    <div class="sb dis" style="left:503px;width:45px">Pulse</div>
    <div class="sb" style="left:555px;width:718px"></div>
  </div>
  <div id="sep"></div><div id="bottom"></div><div id="bline"></div>

  <div id="panel">
    <div id="ptitle"><i></i><span>Search</span></div>
    <div id="pbody">
    <div style="position:absolute;left:0;top:38px;width:1px;height:671px;background:#4c4c48"></div>
    <div id="pclose"><svg width="23" height="22" viewBox="0 0 23 22"><path d="M7.5 7.5 L15.5 15.5 M15.5 7.5 L7.5 15.5" stroke="#fff" stroke-width="2.2" fill="none"/></svg></div>
    <div id="tabs">
      <div class="tab on" style="top:0px;height:65px;padding-top:25px;"><span style="transform:scaleX(0.905)">Main</span></div>
      <div class="tab off" style="top:65px;height:63px;padding-top:22px;border-top-left-radius:9px;border-top-width:1px;"><span style="transform:scaleX(0.86)">Peak</span></div>
      <div class="tab off" style="top:128px;height:63px;padding-top:21px;"><span style="transform:scaleX(0.95)">Target</span></div>
      <div class="tab off" style="top:191px;height:63px;padding-top:11px;"><span style="transform:scaleX(0.9)">Multi Peak</span><span style="transform:scaleX(0.964)">&amp; Target</span></div>
      <div class="tab off" style="top:254px;height:63px;padding-top:11px;"><span style="transform:scaleX(0.944)">Bandwidth</span><span style="transform:scaleX(0.956)">&amp; Notch</span></div>
      <div class="tab off" style="top:317px;height:63px;padding-top:11px;"><span style="transform:scaleX(0.91)">Comp</span><span style="transform:scaleX(0.93)">&amp; Sat</span></div>
      <div class="tab off" style="top:380px;height:65px;padding-top:11px;border-bottom:2px solid #3a3a3a;"><span style="transform:scaleX(0.927)">Normal</span><span style="transform:scaleX(0.907)">Op Pt</span></div>
    </div>
    <div class="btn" style="top:47px"><div class="lbl" style="top:25px;transform:scaleX(0.888)">Max Search</div></div>
    <div class="btn" style="top:130px"><div class="lbl" style="top:25px;transform:scaleX(0.9)">Min Search</div></div>
    <div class="btn" style="top:213px"><div class="lbl" style="top:8px;width:134px;transform:scaleX(0.878)">Search Range</div><div class="arr"></div><div class="val">User 1</div></div>
    <div class="btn" style="top:296px"><div class="lbl" style="top:8px;transform:scaleX(0.93)">User Start</div><div class="val"><span style="display:inline-block;transform:scaleX(.94)">3.3 GHz</span></div></div>
    <div class="btn" style="top:379px"><div class="lbl" style="top:8px;transform:scaleX(0.935)">User Stop</div><div class="val"><span style="display:inline-block;transform:scaleX(.94)">3.31 GHz</span></div></div>
    <div class="btn empty" style="top:462px;height:74px"></div>
    <div class="btn" style="top:546px"><div class="lbl" style="top:8px;width:134px;transform:scaleX(0.943)">Tracking</div><div class="arr"></div><div class="val">Max</div></div>
    <div class="btn" style="top:629px"><div class="lbl" style="top:25px;transform:scaleX(0.913)">Search...</div></div>
    </div>
  </div>
  <div id="wm">www.xahxmicrowave.com</div>
</div>
</body>
</html>
